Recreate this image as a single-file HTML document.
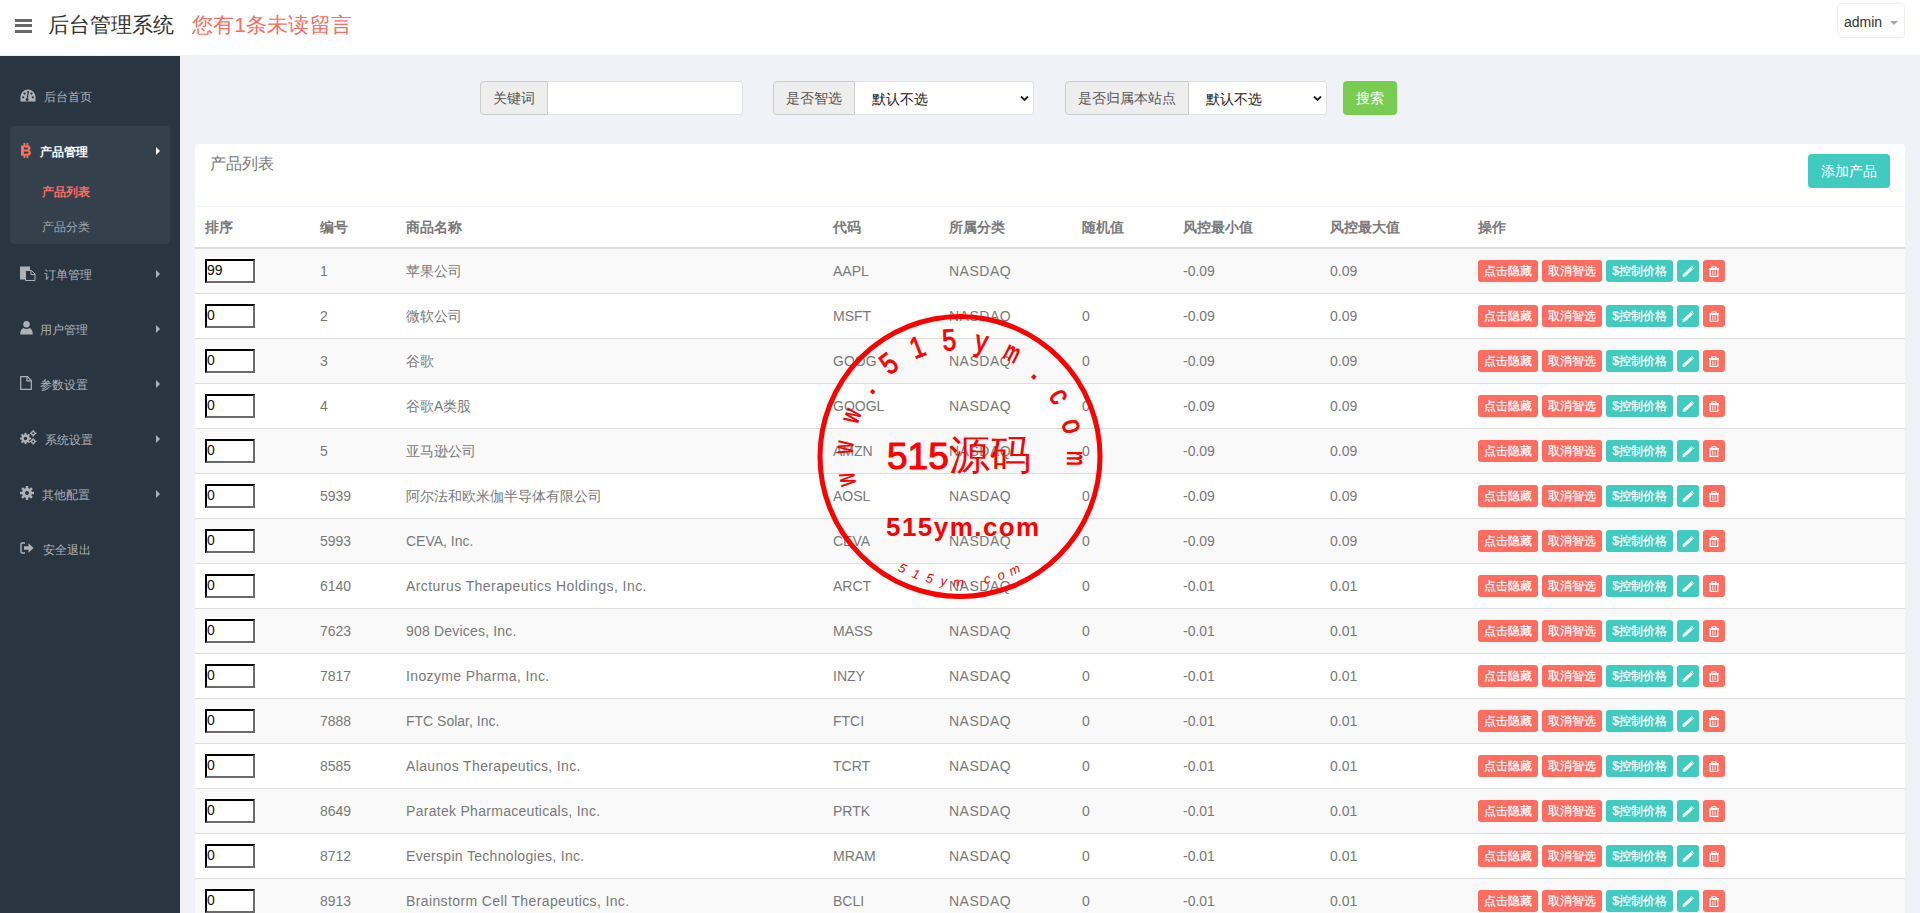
<!DOCTYPE html>
<html><head><meta charset="utf-8"><title>后台管理系统</title>
<style>
*{box-sizing:border-box;margin:0;padding:0}
html,body{width:1920px;height:913px;overflow:hidden}
body{background:#f1f2f7;font-family:"Liberation Sans",sans-serif;color:#797979;position:relative}
.abs{position:absolute;white-space:nowrap}
#hdr{position:absolute;left:0;top:0;width:1920px;height:56px;background:#fff;border-bottom:1px solid #eff0f5}
.bar{position:absolute;left:15px;width:17px;height:3px;background:#686868}
#title{position:absolute;left:48px;top:12px;font-size:21px;line-height:26px;color:#333}
#notice{position:absolute;left:192px;top:12px;letter-spacing:0.15px;font-size:21px;line-height:26px;color:#ff6c60}
#user{position:absolute;left:1837px;top:3px;width:68px;height:35px;border:1px solid #eceef4;border-radius:5px;background:#fff}
#user span{position:absolute;left:6px;top:11px;font-size:14px;line-height:14px;color:#333}
#user i{position:absolute;left:52px;top:17px;width:0;height:0;border-left:4px solid transparent;border-right:4px solid transparent;border-top:4px solid #a3a6b4}
#side{position:absolute;left:0;top:56px;width:180px;height:857px;background:#2a3542}
.mi{position:absolute;left:0;width:180px;height:20px;font-size:12px;line-height:20px;color:#aeb2b7}
.mi .t{position:absolute;top:1px}
.mi svg{position:absolute}
.arr{position:absolute;left:156px;top:6px;width:0;height:0;border-top:4px solid transparent;border-bottom:4px solid transparent;border-left:4px solid #aeb2b7}
#subbox{position:absolute;left:10px;top:70px;width:160px;height:118px;background:#35404d;border-radius:4px}
/* form */
.addon{position:absolute;top:81px;height:34px;background:#eee;border:1px solid #ccc;border-radius:4px 0 0 4px;font-size:14px;line-height:32px;color:#555;padding-left:12px}
.ctl{position:absolute;top:81px;height:34px;background:#fff;border:1px solid #e2e2e4;border-left:0;border-radius:0 4px 4px 0}
.ctl span{position:absolute;left:17px;top:8px;font-size:14px;line-height:18px;color:#222}
.chev{position:absolute;top:12px;width:9px;height:9px}
#sbtn{position:absolute;left:1343px;top:81px;width:54px;height:34px;background:#78cd51;border-radius:4px;color:#fff;font-size:14px;line-height:34px;text-align:center}
/* panel */
#panel{position:absolute;left:195px;top:144px;width:1710px;height:800px;background:#fff;border-radius:4px}
#ph{position:absolute;left:15px;top:10px;font-size:16px;line-height:20px;color:#797979}
#addbtn{position:absolute;left:1613px;top:10px;width:82px;height:34px;background:#41cac0;border-radius:4px;color:#fff;font-size:14px;line-height:34px;text-align:center}
#phline{position:absolute;left:0;top:62px;width:1710px;height:1px;background:#eff2f7}
.th{position:absolute;top:75px;font-size:14px;font-weight:bold;line-height:16px;color:#797979}
#thline{position:absolute;left:0;top:103px;width:1710px;height:2px;background:#ddd}
.row{position:absolute;left:0;width:1710px;height:45px;border-bottom:1px solid #ddd}
.row.odd{background:#f9f9f9}
.c{position:absolute;top:14px;font-size:14px;line-height:16px;color:#797979}
.inp{position:absolute;left:10px;top:10px;width:50px;height:24px;background:#fff;border:2px solid;border-color:#000 #6b6b6b #6b6b6b #000;font-size:14px;line-height:18px;color:#111;padding-left:0;box-shadow:0 0 0 1px #fff}
.btn{position:absolute;top:11px;height:22px;border-radius:3px;color:#fff;font-size:12px;line-height:23px;text-align:center;-webkit-text-stroke:0.2px #fff}
.r{background:#ff6c60}.g{background:#41cac0}
.btn svg{position:absolute}
</style></head>
<body>
<div id="hdr">
<div class="bar" style="top:19px"></div><div class="bar" style="top:24px"></div><div class="bar" style="top:30px"></div>
<div id="title">后台管理系统</div>
<div id="notice">您有1条未读留言</div>
<div id="user"><span>admin</span><i></i></div>
</div>
<div id="side">
<div id="subbox"></div>
<div class="mi" style="top:30px"><svg style="left:20px;top:3px" width="16" height="13" viewBox="0 0 16 13"><path d="M8 0.5A7.5 7.5 0 0 0 0.5 8v4.5h15V8A7.5 7.5 0 0 0 8 0.5z" fill="#aeb2b7"/><circle cx="3.2" cy="8.3" r="1.1" fill="#2a3542"/><circle cx="4.6" cy="4.6" r="1.1" fill="#2a3542"/><circle cx="8" cy="3.1" r="1.1" fill="#2a3542"/><circle cx="12.8" cy="8.3" r="1.1" fill="#2a3542"/><circle cx="11.4" cy="4.6" r="1.1" fill="#2a3542"/><path d="M8.2 4.2L7.2 9.6" stroke="#2a3542" stroke-width="1.2"/><circle cx="7.1" cy="10.4" r="1.5" fill="#2a3542"/></svg><span class="t" style="left:44px;">后台首页</span></div>
<div class="mi" style="top:85px"><svg style="left:20px;top:2px" width="12" height="15" viewBox="0 0 12 15"><path d="M1 2.5h6.2c2.2 0 3.3 1.1 3.3 2.6 0 1.1-.6 1.9-1.6 2.2 1.3.3 2.1 1.2 2.1 2.5 0 1.8-1.3 2.9-3.6 2.9H1z" fill="#ff6c60"/><path d="M4 4.6h2.7c.9 0 1.3.4 1.3 1s-.4 1-1.3 1H4zM4 8.5h3.1c1 0 1.5.4 1.5 1.1s-.5 1.1-1.5 1.1H4z" fill="#35404d"/><rect x="3.5" y="0" width="1.8" height="3" fill="#ff6c60"/><rect x="6.5" y="0" width="1.8" height="3" fill="#ff6c60"/><rect x="3.5" y="12" width="1.8" height="3" fill="#ff6c60"/><rect x="6.5" y="12" width="1.8" height="3" fill="#ff6c60"/></svg><span class="t" style="left:40px;color:#fff;font-weight:bold;">产品管理</span><i class="arr" style="border-left-color:#fff"></i></div>
<div class="mi" style="top:208px"><svg style="left:20px;top:2px" width="16" height="15" viewBox="0 0 16 15"><rect x="0" y="0.5" width="10" height="13" fill="#aeb2b7"/><path d="M5.5 4.5h6l3.5 3.5v6.5h-9.5z" fill="#2a3542" stroke="#aeb2b7" stroke-width="1"/><path d="M11 4.5v4h4" fill="none" stroke="#aeb2b7" stroke-width="1"/></svg><span class="t" style="left:44px;">订单管理</span><i class="arr"></i></div>
<div class="mi" style="top:263px"><svg style="left:20px;top:2px" width="13" height="14" viewBox="0 0 13 14"><circle cx="6.5" cy="3.3" r="3.2" fill="#aeb2b7"/><path d="M0.2 13.5c0-4 1.5-6.2 3.3-6.6 1.8 1.3 4.2 1.3 6 0 1.8.4 3.3 2.6 3.3 6.6z" fill="#aeb2b7"/></svg><span class="t" style="left:40px;">用户管理</span><i class="arr"></i></div>
<div class="mi" style="top:318px"><svg style="left:20px;top:2px" width="12" height="14" viewBox="0 0 12 14"><path d="M0.7 0.7h6.8l3.8 3.8v8.8H0.7z" fill="none" stroke="#aeb2b7" stroke-width="1.2"/><path d="M7 0.7v4.2h4.3" fill="none" stroke="#aeb2b7" stroke-width="1.2"/></svg><span class="t" style="left:40px;">参数设置</span><i class="arr"></i></div>
<div class="mi" style="top:373px"><svg style="left:20px;top:1px" width="17" height="15" viewBox="0 0 17 15"><g fill="#aeb2b7"><circle cx="5.5" cy="8.5" r="4.2"/><rect x="4.6" y="2.8" width="1.8" height="11.4"/><rect x="-0.2" y="7.6" width="11.4" height="1.8"/><rect x="4.6" y="2.8" width="1.8" height="11.4" transform="rotate(45 5.5 8.5)"/><rect x="4.6" y="2.8" width="1.8" height="11.4" transform="rotate(-45 5.5 8.5)"/><circle cx="13.2" cy="3.3" r="2.4"/><rect x="12.6" y="0" width="1.2" height="6.6"/><rect x="9.9" y="2.7" width="6.6" height="1.2"/><circle cx="13.2" cy="11.4" r="2.4"/><rect x="12.6" y="8.1" width="1.2" height="6.6"/><rect x="9.9" y="10.8" width="6.6" height="1.2"/></g><circle cx="5.5" cy="8.5" r="1.7" fill="#2a3542"/><circle cx="13.2" cy="3.3" r="1" fill="#2a3542"/><circle cx="13.2" cy="11.4" r="1" fill="#2a3542"/></svg><span class="t" style="left:45px;">系统设置</span><i class="arr"></i></div>
<div class="mi" style="top:428px"><svg style="left:20px;top:2px" width="14" height="14" viewBox="0 0 14 14"><g fill="#aeb2b7"><circle cx="7" cy="7" r="5"/><rect x="5.8" y="0" width="2.4" height="14"/><rect x="0" y="5.8" width="14" height="2.4"/><rect x="5.8" y="0" width="2.4" height="14" transform="rotate(45 7 7)"/><rect x="5.8" y="0" width="2.4" height="14" transform="rotate(-45 7 7)"/></g><circle cx="7" cy="7" r="2" fill="#2a3542"/></svg><span class="t" style="left:42px;">其他配置</span><i class="arr"></i></div>
<div class="mi" style="top:483px"><svg style="left:20px;top:3px" width="14" height="12" viewBox="0 0 14 12"><path d="M5 1H2.2C1.5 1 1 1.5 1 2.2v7.6C1 10.5 1.5 11 2.2 11H5" fill="none" stroke="#aeb2b7" stroke-width="1.4"/><path d="M4 4.2h4.5V1.2L13.6 6l-5.1 4.8V7.8H4z" fill="#aeb2b7"/></svg><span class="t" style="left:43px;">安全退出</span></div>
<div class="mi" style="top:125px"><span class="t" style="left:42px;color:#ff6c60;font-weight:bold">产品列表</span></div>
<div class="mi" style="top:160px"><span class="t" style="left:42px;color:#a3a8af">产品分类</span></div>
</div>
<div class="addon" style="left:480px;width:68px">关键词</div>
<div class="ctl" style="left:548px;width:195px"></div>
<div class="addon" style="left:773px;width:82px">是否智选</div>
<div class="ctl" style="left:855px;width:179px"><span>默认不选</span><svg class="chev" style="left:165px" viewBox="0 0 9 9"><path d="M1 2.5L4.5 6 8 2.5" fill="none" stroke="#222" stroke-width="1.8"/></svg></div>
<div class="addon" style="left:1065px;width:124px">是否归属本站点</div>
<div class="ctl" style="left:1189px;width:138px"><span>默认不选</span><svg class="chev" style="left:124px" viewBox="0 0 9 9"><path d="M1 2.5L4.5 6 8 2.5" fill="none" stroke="#222" stroke-width="1.8"/></svg></div>
<div id="sbtn">搜索</div>
<div id="panel">
<div id="ph">产品列表</div>
<div id="addbtn">添加产品</div>
<div id="phline"></div>
<div class="th" style="left:10px">排序</div>
<div class="th" style="left:125px">编号</div>
<div class="th" style="left:211px">商品名称</div>
<div class="th" style="left:638px">代码</div>
<div class="th" style="left:754px">所属分类</div>
<div class="th" style="left:887px">随机值</div>
<div class="th" style="left:988px">风控最小值</div>
<div class="th" style="left:1135px">风控最大值</div>
<div class="th" style="left:1283px">操作</div>
<div id="thline"></div>
<div class="row odd" style="top:105px"><div class="inp">99</div><div class="c" style="left:125px;">1</div><div class="c" style="left:211px;">苹果公司</div><div class="c" style="left:638px;">AAPL</div><div class="c" style="left:754px;letter-spacing:0.5px;">NASDAQ</div><div class="c" style="left:988px;">-0.09</div><div class="c" style="left:1135px;">0.09</div><div class="btn r" style="left:1283px;width:60px">点击隐藏</div><div class="btn r" style="left:1347px;width:60px">取消智选</div><div class="btn g" style="left:1411px;width:67px">$控制价格</div><div class="btn g" style="left:1482px;width:22px"><svg style="left:0;top:0" width="22" height="22" viewBox="0 0 22 22"><path d="M5.5 17L6 14.2 14.9 5.9 17 8.2 8.3 16.6z" fill="#fff"/><path d="M13.9 6.8L16.1 9.1" stroke="#41cac0" stroke-width="0.7"/><path d="M7.2 14.6L8.1 15.5" stroke="#41cac0" stroke-width="0.6"/></svg></div><div class="btn r" style="left:1508px;width:22px"><svg style="left:0;top:0" width="22" height="22" viewBox="0 0 22 22"><path d="M8.8 8.4V7.6C8.8 7 9.2 6.8 9.8 6.8h2.4c.6 0 1 .2 1 .8v.8" fill="none" stroke="#fff" stroke-width="1.1"/><rect x="6" y="8" width="10" height="1.5" fill="#fff"/><path d="M7.2 9.3h7.6v7.1H7.2z" fill="none" stroke="#fff" stroke-width="1.3"/><path d="M9.5 10.5v4.6M11 10.5v4.6M12.5 10.5v4.6" stroke="#fff" stroke-width="0.8" opacity="0.75"/></svg></div></div>
<div class="row" style="top:150px"><div class="inp">0</div><div class="c" style="left:125px;">2</div><div class="c" style="left:211px;">微软公司</div><div class="c" style="left:638px;">MSFT</div><div class="c" style="left:754px;letter-spacing:0.5px;">NASDAQ</div><div class="c" style="left:887px;">0</div><div class="c" style="left:988px;">-0.09</div><div class="c" style="left:1135px;">0.09</div><div class="btn r" style="left:1283px;width:60px">点击隐藏</div><div class="btn r" style="left:1347px;width:60px">取消智选</div><div class="btn g" style="left:1411px;width:67px">$控制价格</div><div class="btn g" style="left:1482px;width:22px"><svg style="left:0;top:0" width="22" height="22" viewBox="0 0 22 22"><path d="M5.5 17L6 14.2 14.9 5.9 17 8.2 8.3 16.6z" fill="#fff"/><path d="M13.9 6.8L16.1 9.1" stroke="#41cac0" stroke-width="0.7"/><path d="M7.2 14.6L8.1 15.5" stroke="#41cac0" stroke-width="0.6"/></svg></div><div class="btn r" style="left:1508px;width:22px"><svg style="left:0;top:0" width="22" height="22" viewBox="0 0 22 22"><path d="M8.8 8.4V7.6C8.8 7 9.2 6.8 9.8 6.8h2.4c.6 0 1 .2 1 .8v.8" fill="none" stroke="#fff" stroke-width="1.1"/><rect x="6" y="8" width="10" height="1.5" fill="#fff"/><path d="M7.2 9.3h7.6v7.1H7.2z" fill="none" stroke="#fff" stroke-width="1.3"/><path d="M9.5 10.5v4.6M11 10.5v4.6M12.5 10.5v4.6" stroke="#fff" stroke-width="0.8" opacity="0.75"/></svg></div></div>
<div class="row odd" style="top:195px"><div class="inp">0</div><div class="c" style="left:125px;">3</div><div class="c" style="left:211px;">谷歌</div><div class="c" style="left:638px;">GOOG</div><div class="c" style="left:754px;letter-spacing:0.5px;">NASDAQ</div><div class="c" style="left:887px;">0</div><div class="c" style="left:988px;">-0.09</div><div class="c" style="left:1135px;">0.09</div><div class="btn r" style="left:1283px;width:60px">点击隐藏</div><div class="btn r" style="left:1347px;width:60px">取消智选</div><div class="btn g" style="left:1411px;width:67px">$控制价格</div><div class="btn g" style="left:1482px;width:22px"><svg style="left:0;top:0" width="22" height="22" viewBox="0 0 22 22"><path d="M5.5 17L6 14.2 14.9 5.9 17 8.2 8.3 16.6z" fill="#fff"/><path d="M13.9 6.8L16.1 9.1" stroke="#41cac0" stroke-width="0.7"/><path d="M7.2 14.6L8.1 15.5" stroke="#41cac0" stroke-width="0.6"/></svg></div><div class="btn r" style="left:1508px;width:22px"><svg style="left:0;top:0" width="22" height="22" viewBox="0 0 22 22"><path d="M8.8 8.4V7.6C8.8 7 9.2 6.8 9.8 6.8h2.4c.6 0 1 .2 1 .8v.8" fill="none" stroke="#fff" stroke-width="1.1"/><rect x="6" y="8" width="10" height="1.5" fill="#fff"/><path d="M7.2 9.3h7.6v7.1H7.2z" fill="none" stroke="#fff" stroke-width="1.3"/><path d="M9.5 10.5v4.6M11 10.5v4.6M12.5 10.5v4.6" stroke="#fff" stroke-width="0.8" opacity="0.75"/></svg></div></div>
<div class="row" style="top:240px"><div class="inp">0</div><div class="c" style="left:125px;">4</div><div class="c" style="left:211px;">谷歌A类股</div><div class="c" style="left:638px;">GOOGL</div><div class="c" style="left:754px;letter-spacing:0.5px;">NASDAQ</div><div class="c" style="left:887px;">0</div><div class="c" style="left:988px;">-0.09</div><div class="c" style="left:1135px;">0.09</div><div class="btn r" style="left:1283px;width:60px">点击隐藏</div><div class="btn r" style="left:1347px;width:60px">取消智选</div><div class="btn g" style="left:1411px;width:67px">$控制价格</div><div class="btn g" style="left:1482px;width:22px"><svg style="left:0;top:0" width="22" height="22" viewBox="0 0 22 22"><path d="M5.5 17L6 14.2 14.9 5.9 17 8.2 8.3 16.6z" fill="#fff"/><path d="M13.9 6.8L16.1 9.1" stroke="#41cac0" stroke-width="0.7"/><path d="M7.2 14.6L8.1 15.5" stroke="#41cac0" stroke-width="0.6"/></svg></div><div class="btn r" style="left:1508px;width:22px"><svg style="left:0;top:0" width="22" height="22" viewBox="0 0 22 22"><path d="M8.8 8.4V7.6C8.8 7 9.2 6.8 9.8 6.8h2.4c.6 0 1 .2 1 .8v.8" fill="none" stroke="#fff" stroke-width="1.1"/><rect x="6" y="8" width="10" height="1.5" fill="#fff"/><path d="M7.2 9.3h7.6v7.1H7.2z" fill="none" stroke="#fff" stroke-width="1.3"/><path d="M9.5 10.5v4.6M11 10.5v4.6M12.5 10.5v4.6" stroke="#fff" stroke-width="0.8" opacity="0.75"/></svg></div></div>
<div class="row odd" style="top:285px"><div class="inp">0</div><div class="c" style="left:125px;">5</div><div class="c" style="left:211px;">亚马逊公司</div><div class="c" style="left:638px;">AMZN</div><div class="c" style="left:754px;letter-spacing:0.5px;">NASDAQ</div><div class="c" style="left:887px;">0</div><div class="c" style="left:988px;">-0.09</div><div class="c" style="left:1135px;">0.09</div><div class="btn r" style="left:1283px;width:60px">点击隐藏</div><div class="btn r" style="left:1347px;width:60px">取消智选</div><div class="btn g" style="left:1411px;width:67px">$控制价格</div><div class="btn g" style="left:1482px;width:22px"><svg style="left:0;top:0" width="22" height="22" viewBox="0 0 22 22"><path d="M5.5 17L6 14.2 14.9 5.9 17 8.2 8.3 16.6z" fill="#fff"/><path d="M13.9 6.8L16.1 9.1" stroke="#41cac0" stroke-width="0.7"/><path d="M7.2 14.6L8.1 15.5" stroke="#41cac0" stroke-width="0.6"/></svg></div><div class="btn r" style="left:1508px;width:22px"><svg style="left:0;top:0" width="22" height="22" viewBox="0 0 22 22"><path d="M8.8 8.4V7.6C8.8 7 9.2 6.8 9.8 6.8h2.4c.6 0 1 .2 1 .8v.8" fill="none" stroke="#fff" stroke-width="1.1"/><rect x="6" y="8" width="10" height="1.5" fill="#fff"/><path d="M7.2 9.3h7.6v7.1H7.2z" fill="none" stroke="#fff" stroke-width="1.3"/><path d="M9.5 10.5v4.6M11 10.5v4.6M12.5 10.5v4.6" stroke="#fff" stroke-width="0.8" opacity="0.75"/></svg></div></div>
<div class="row" style="top:330px"><div class="inp">0</div><div class="c" style="left:125px;">5939</div><div class="c" style="left:211px;">阿尔法和欧米伽半导体有限公司</div><div class="c" style="left:638px;">AOSL</div><div class="c" style="left:754px;letter-spacing:0.5px;">NASDAQ</div><div class="c" style="left:887px;">0</div><div class="c" style="left:988px;">-0.09</div><div class="c" style="left:1135px;">0.09</div><div class="btn r" style="left:1283px;width:60px">点击隐藏</div><div class="btn r" style="left:1347px;width:60px">取消智选</div><div class="btn g" style="left:1411px;width:67px">$控制价格</div><div class="btn g" style="left:1482px;width:22px"><svg style="left:0;top:0" width="22" height="22" viewBox="0 0 22 22"><path d="M5.5 17L6 14.2 14.9 5.9 17 8.2 8.3 16.6z" fill="#fff"/><path d="M13.9 6.8L16.1 9.1" stroke="#41cac0" stroke-width="0.7"/><path d="M7.2 14.6L8.1 15.5" stroke="#41cac0" stroke-width="0.6"/></svg></div><div class="btn r" style="left:1508px;width:22px"><svg style="left:0;top:0" width="22" height="22" viewBox="0 0 22 22"><path d="M8.8 8.4V7.6C8.8 7 9.2 6.8 9.8 6.8h2.4c.6 0 1 .2 1 .8v.8" fill="none" stroke="#fff" stroke-width="1.1"/><rect x="6" y="8" width="10" height="1.5" fill="#fff"/><path d="M7.2 9.3h7.6v7.1H7.2z" fill="none" stroke="#fff" stroke-width="1.3"/><path d="M9.5 10.5v4.6M11 10.5v4.6M12.5 10.5v4.6" stroke="#fff" stroke-width="0.8" opacity="0.75"/></svg></div></div>
<div class="row odd" style="top:375px"><div class="inp">0</div><div class="c" style="left:125px;">5993</div><div class="c" style="left:211px;">CEVA, Inc.</div><div class="c" style="left:638px;">CEVA</div><div class="c" style="left:754px;letter-spacing:0.5px;">NASDAQ</div><div class="c" style="left:887px;">0</div><div class="c" style="left:988px;">-0.09</div><div class="c" style="left:1135px;">0.09</div><div class="btn r" style="left:1283px;width:60px">点击隐藏</div><div class="btn r" style="left:1347px;width:60px">取消智选</div><div class="btn g" style="left:1411px;width:67px">$控制价格</div><div class="btn g" style="left:1482px;width:22px"><svg style="left:0;top:0" width="22" height="22" viewBox="0 0 22 22"><path d="M5.5 17L6 14.2 14.9 5.9 17 8.2 8.3 16.6z" fill="#fff"/><path d="M13.9 6.8L16.1 9.1" stroke="#41cac0" stroke-width="0.7"/><path d="M7.2 14.6L8.1 15.5" stroke="#41cac0" stroke-width="0.6"/></svg></div><div class="btn r" style="left:1508px;width:22px"><svg style="left:0;top:0" width="22" height="22" viewBox="0 0 22 22"><path d="M8.8 8.4V7.6C8.8 7 9.2 6.8 9.8 6.8h2.4c.6 0 1 .2 1 .8v.8" fill="none" stroke="#fff" stroke-width="1.1"/><rect x="6" y="8" width="10" height="1.5" fill="#fff"/><path d="M7.2 9.3h7.6v7.1H7.2z" fill="none" stroke="#fff" stroke-width="1.3"/><path d="M9.5 10.5v4.6M11 10.5v4.6M12.5 10.5v4.6" stroke="#fff" stroke-width="0.8" opacity="0.75"/></svg></div></div>
<div class="row" style="top:420px"><div class="inp">0</div><div class="c" style="left:125px;">6140</div><div class="c" style="left:211px;letter-spacing:0.43px;">Arcturus Therapeutics Holdings, Inc.</div><div class="c" style="left:638px;">ARCT</div><div class="c" style="left:754px;letter-spacing:0.5px;">NASDAQ</div><div class="c" style="left:887px;">0</div><div class="c" style="left:988px;">-0.01</div><div class="c" style="left:1135px;">0.01</div><div class="btn r" style="left:1283px;width:60px">点击隐藏</div><div class="btn r" style="left:1347px;width:60px">取消智选</div><div class="btn g" style="left:1411px;width:67px">$控制价格</div><div class="btn g" style="left:1482px;width:22px"><svg style="left:0;top:0" width="22" height="22" viewBox="0 0 22 22"><path d="M5.5 17L6 14.2 14.9 5.9 17 8.2 8.3 16.6z" fill="#fff"/><path d="M13.9 6.8L16.1 9.1" stroke="#41cac0" stroke-width="0.7"/><path d="M7.2 14.6L8.1 15.5" stroke="#41cac0" stroke-width="0.6"/></svg></div><div class="btn r" style="left:1508px;width:22px"><svg style="left:0;top:0" width="22" height="22" viewBox="0 0 22 22"><path d="M8.8 8.4V7.6C8.8 7 9.2 6.8 9.8 6.8h2.4c.6 0 1 .2 1 .8v.8" fill="none" stroke="#fff" stroke-width="1.1"/><rect x="6" y="8" width="10" height="1.5" fill="#fff"/><path d="M7.2 9.3h7.6v7.1H7.2z" fill="none" stroke="#fff" stroke-width="1.3"/><path d="M9.5 10.5v4.6M11 10.5v4.6M12.5 10.5v4.6" stroke="#fff" stroke-width="0.8" opacity="0.75"/></svg></div></div>
<div class="row odd" style="top:465px"><div class="inp">0</div><div class="c" style="left:125px;">7623</div><div class="c" style="left:211px;letter-spacing:0.19px;">908 Devices, Inc.</div><div class="c" style="left:638px;">MASS</div><div class="c" style="left:754px;letter-spacing:0.5px;">NASDAQ</div><div class="c" style="left:887px;">0</div><div class="c" style="left:988px;">-0.01</div><div class="c" style="left:1135px;">0.01</div><div class="btn r" style="left:1283px;width:60px">点击隐藏</div><div class="btn r" style="left:1347px;width:60px">取消智选</div><div class="btn g" style="left:1411px;width:67px">$控制价格</div><div class="btn g" style="left:1482px;width:22px"><svg style="left:0;top:0" width="22" height="22" viewBox="0 0 22 22"><path d="M5.5 17L6 14.2 14.9 5.9 17 8.2 8.3 16.6z" fill="#fff"/><path d="M13.9 6.8L16.1 9.1" stroke="#41cac0" stroke-width="0.7"/><path d="M7.2 14.6L8.1 15.5" stroke="#41cac0" stroke-width="0.6"/></svg></div><div class="btn r" style="left:1508px;width:22px"><svg style="left:0;top:0" width="22" height="22" viewBox="0 0 22 22"><path d="M8.8 8.4V7.6C8.8 7 9.2 6.8 9.8 6.8h2.4c.6 0 1 .2 1 .8v.8" fill="none" stroke="#fff" stroke-width="1.1"/><rect x="6" y="8" width="10" height="1.5" fill="#fff"/><path d="M7.2 9.3h7.6v7.1H7.2z" fill="none" stroke="#fff" stroke-width="1.3"/><path d="M9.5 10.5v4.6M11 10.5v4.6M12.5 10.5v4.6" stroke="#fff" stroke-width="0.8" opacity="0.75"/></svg></div></div>
<div class="row" style="top:510px"><div class="inp">0</div><div class="c" style="left:125px;">7817</div><div class="c" style="left:211px;letter-spacing:0.37px;">Inozyme Pharma, Inc.</div><div class="c" style="left:638px;">INZY</div><div class="c" style="left:754px;letter-spacing:0.5px;">NASDAQ</div><div class="c" style="left:887px;">0</div><div class="c" style="left:988px;">-0.01</div><div class="c" style="left:1135px;">0.01</div><div class="btn r" style="left:1283px;width:60px">点击隐藏</div><div class="btn r" style="left:1347px;width:60px">取消智选</div><div class="btn g" style="left:1411px;width:67px">$控制价格</div><div class="btn g" style="left:1482px;width:22px"><svg style="left:0;top:0" width="22" height="22" viewBox="0 0 22 22"><path d="M5.5 17L6 14.2 14.9 5.9 17 8.2 8.3 16.6z" fill="#fff"/><path d="M13.9 6.8L16.1 9.1" stroke="#41cac0" stroke-width="0.7"/><path d="M7.2 14.6L8.1 15.5" stroke="#41cac0" stroke-width="0.6"/></svg></div><div class="btn r" style="left:1508px;width:22px"><svg style="left:0;top:0" width="22" height="22" viewBox="0 0 22 22"><path d="M8.8 8.4V7.6C8.8 7 9.2 6.8 9.8 6.8h2.4c.6 0 1 .2 1 .8v.8" fill="none" stroke="#fff" stroke-width="1.1"/><rect x="6" y="8" width="10" height="1.5" fill="#fff"/><path d="M7.2 9.3h7.6v7.1H7.2z" fill="none" stroke="#fff" stroke-width="1.3"/><path d="M9.5 10.5v4.6M11 10.5v4.6M12.5 10.5v4.6" stroke="#fff" stroke-width="0.8" opacity="0.75"/></svg></div></div>
<div class="row odd" style="top:555px"><div class="inp">0</div><div class="c" style="left:125px;">7888</div><div class="c" style="left:211px;">FTC Solar, Inc.</div><div class="c" style="left:638px;">FTCI</div><div class="c" style="left:754px;letter-spacing:0.5px;">NASDAQ</div><div class="c" style="left:887px;">0</div><div class="c" style="left:988px;">-0.01</div><div class="c" style="left:1135px;">0.01</div><div class="btn r" style="left:1283px;width:60px">点击隐藏</div><div class="btn r" style="left:1347px;width:60px">取消智选</div><div class="btn g" style="left:1411px;width:67px">$控制价格</div><div class="btn g" style="left:1482px;width:22px"><svg style="left:0;top:0" width="22" height="22" viewBox="0 0 22 22"><path d="M5.5 17L6 14.2 14.9 5.9 17 8.2 8.3 16.6z" fill="#fff"/><path d="M13.9 6.8L16.1 9.1" stroke="#41cac0" stroke-width="0.7"/><path d="M7.2 14.6L8.1 15.5" stroke="#41cac0" stroke-width="0.6"/></svg></div><div class="btn r" style="left:1508px;width:22px"><svg style="left:0;top:0" width="22" height="22" viewBox="0 0 22 22"><path d="M8.8 8.4V7.6C8.8 7 9.2 6.8 9.8 6.8h2.4c.6 0 1 .2 1 .8v.8" fill="none" stroke="#fff" stroke-width="1.1"/><rect x="6" y="8" width="10" height="1.5" fill="#fff"/><path d="M7.2 9.3h7.6v7.1H7.2z" fill="none" stroke="#fff" stroke-width="1.3"/><path d="M9.5 10.5v4.6M11 10.5v4.6M12.5 10.5v4.6" stroke="#fff" stroke-width="0.8" opacity="0.75"/></svg></div></div>
<div class="row" style="top:600px"><div class="inp">0</div><div class="c" style="left:125px;">8585</div><div class="c" style="left:211px;letter-spacing:0.36px;">Alaunos Therapeutics, Inc.</div><div class="c" style="left:638px;">TCRT</div><div class="c" style="left:754px;letter-spacing:0.5px;">NASDAQ</div><div class="c" style="left:887px;">0</div><div class="c" style="left:988px;">-0.01</div><div class="c" style="left:1135px;">0.01</div><div class="btn r" style="left:1283px;width:60px">点击隐藏</div><div class="btn r" style="left:1347px;width:60px">取消智选</div><div class="btn g" style="left:1411px;width:67px">$控制价格</div><div class="btn g" style="left:1482px;width:22px"><svg style="left:0;top:0" width="22" height="22" viewBox="0 0 22 22"><path d="M5.5 17L6 14.2 14.9 5.9 17 8.2 8.3 16.6z" fill="#fff"/><path d="M13.9 6.8L16.1 9.1" stroke="#41cac0" stroke-width="0.7"/><path d="M7.2 14.6L8.1 15.5" stroke="#41cac0" stroke-width="0.6"/></svg></div><div class="btn r" style="left:1508px;width:22px"><svg style="left:0;top:0" width="22" height="22" viewBox="0 0 22 22"><path d="M8.8 8.4V7.6C8.8 7 9.2 6.8 9.8 6.8h2.4c.6 0 1 .2 1 .8v.8" fill="none" stroke="#fff" stroke-width="1.1"/><rect x="6" y="8" width="10" height="1.5" fill="#fff"/><path d="M7.2 9.3h7.6v7.1H7.2z" fill="none" stroke="#fff" stroke-width="1.3"/><path d="M9.5 10.5v4.6M11 10.5v4.6M12.5 10.5v4.6" stroke="#fff" stroke-width="0.8" opacity="0.75"/></svg></div></div>
<div class="row odd" style="top:645px"><div class="inp">0</div><div class="c" style="left:125px;">8649</div><div class="c" style="left:211px;letter-spacing:0.29px;">Paratek Pharmaceuticals, Inc.</div><div class="c" style="left:638px;">PRTK</div><div class="c" style="left:754px;letter-spacing:0.5px;">NASDAQ</div><div class="c" style="left:887px;">0</div><div class="c" style="left:988px;">-0.01</div><div class="c" style="left:1135px;">0.01</div><div class="btn r" style="left:1283px;width:60px">点击隐藏</div><div class="btn r" style="left:1347px;width:60px">取消智选</div><div class="btn g" style="left:1411px;width:67px">$控制价格</div><div class="btn g" style="left:1482px;width:22px"><svg style="left:0;top:0" width="22" height="22" viewBox="0 0 22 22"><path d="M5.5 17L6 14.2 14.9 5.9 17 8.2 8.3 16.6z" fill="#fff"/><path d="M13.9 6.8L16.1 9.1" stroke="#41cac0" stroke-width="0.7"/><path d="M7.2 14.6L8.1 15.5" stroke="#41cac0" stroke-width="0.6"/></svg></div><div class="btn r" style="left:1508px;width:22px"><svg style="left:0;top:0" width="22" height="22" viewBox="0 0 22 22"><path d="M8.8 8.4V7.6C8.8 7 9.2 6.8 9.8 6.8h2.4c.6 0 1 .2 1 .8v.8" fill="none" stroke="#fff" stroke-width="1.1"/><rect x="6" y="8" width="10" height="1.5" fill="#fff"/><path d="M7.2 9.3h7.6v7.1H7.2z" fill="none" stroke="#fff" stroke-width="1.3"/><path d="M9.5 10.5v4.6M11 10.5v4.6M12.5 10.5v4.6" stroke="#fff" stroke-width="0.8" opacity="0.75"/></svg></div></div>
<div class="row" style="top:690px"><div class="inp">0</div><div class="c" style="left:125px;">8712</div><div class="c" style="left:211px;letter-spacing:0.31px;">Everspin Technologies, Inc.</div><div class="c" style="left:638px;">MRAM</div><div class="c" style="left:754px;letter-spacing:0.5px;">NASDAQ</div><div class="c" style="left:887px;">0</div><div class="c" style="left:988px;">-0.01</div><div class="c" style="left:1135px;">0.01</div><div class="btn r" style="left:1283px;width:60px">点击隐藏</div><div class="btn r" style="left:1347px;width:60px">取消智选</div><div class="btn g" style="left:1411px;width:67px">$控制价格</div><div class="btn g" style="left:1482px;width:22px"><svg style="left:0;top:0" width="22" height="22" viewBox="0 0 22 22"><path d="M5.5 17L6 14.2 14.9 5.9 17 8.2 8.3 16.6z" fill="#fff"/><path d="M13.9 6.8L16.1 9.1" stroke="#41cac0" stroke-width="0.7"/><path d="M7.2 14.6L8.1 15.5" stroke="#41cac0" stroke-width="0.6"/></svg></div><div class="btn r" style="left:1508px;width:22px"><svg style="left:0;top:0" width="22" height="22" viewBox="0 0 22 22"><path d="M8.8 8.4V7.6C8.8 7 9.2 6.8 9.8 6.8h2.4c.6 0 1 .2 1 .8v.8" fill="none" stroke="#fff" stroke-width="1.1"/><rect x="6" y="8" width="10" height="1.5" fill="#fff"/><path d="M7.2 9.3h7.6v7.1H7.2z" fill="none" stroke="#fff" stroke-width="1.3"/><path d="M9.5 10.5v4.6M11 10.5v4.6M12.5 10.5v4.6" stroke="#fff" stroke-width="0.8" opacity="0.75"/></svg></div></div>
<div class="row odd" style="top:735px"><div class="inp">0</div><div class="c" style="left:125px;">8913</div><div class="c" style="left:211px;letter-spacing:0.38px;">Brainstorm Cell Therapeutics, Inc.</div><div class="c" style="left:638px;">BCLI</div><div class="c" style="left:754px;letter-spacing:0.5px;">NASDAQ</div><div class="c" style="left:887px;">0</div><div class="c" style="left:988px;">-0.01</div><div class="c" style="left:1135px;">0.01</div><div class="btn r" style="left:1283px;width:60px">点击隐藏</div><div class="btn r" style="left:1347px;width:60px">取消智选</div><div class="btn g" style="left:1411px;width:67px">$控制价格</div><div class="btn g" style="left:1482px;width:22px"><svg style="left:0;top:0" width="22" height="22" viewBox="0 0 22 22"><path d="M5.5 17L6 14.2 14.9 5.9 17 8.2 8.3 16.6z" fill="#fff"/><path d="M13.9 6.8L16.1 9.1" stroke="#41cac0" stroke-width="0.7"/><path d="M7.2 14.6L8.1 15.5" stroke="#41cac0" stroke-width="0.6"/></svg></div><div class="btn r" style="left:1508px;width:22px"><svg style="left:0;top:0" width="22" height="22" viewBox="0 0 22 22"><path d="M8.8 8.4V7.6C8.8 7 9.2 6.8 9.8 6.8h2.4c.6 0 1 .2 1 .8v.8" fill="none" stroke="#fff" stroke-width="1.1"/><rect x="6" y="8" width="10" height="1.5" fill="#fff"/><path d="M7.2 9.3h7.6v7.1H7.2z" fill="none" stroke="#fff" stroke-width="1.3"/><path d="M9.5 10.5v4.6M11 10.5v4.6M12.5 10.5v4.6" stroke="#fff" stroke-width="0.8" opacity="0.75"/></svg></div></div>
</div>
<svg style="position:absolute;left:0;top:0" width="1920" height="913" viewBox="0 0 1920 913">
<circle cx="960" cy="456.5" r="140" fill="none" stroke="#ff0000" stroke-width="5"/>
<text x="0" y="0" transform="translate(855.1 477.8) rotate(-101.5) scale(0.58 1)" font-family="Liberation Sans" font-weight="bold" font-size="29" fill="#ff0000" text-anchor="middle">w</text>
<text x="0" y="0" transform="translate(853.3 448.0) rotate(-85.5) scale(0.58 1)" font-family="Liberation Sans" font-weight="bold" font-size="29" fill="#ff0000" text-anchor="middle">w</text>
<text x="0" y="0" transform="translate(859.8 418.9) rotate(-69.4) scale(0.58 1)" font-family="Liberation Sans" font-weight="bold" font-size="29" fill="#ff0000" text-anchor="middle">w</text>
<text x="0" y="0" transform="translate(874.1 392.7) rotate(-53.4) scale(1.0 1)" font-family="Liberation Sans" font-size="30" fill="#ff0000" stroke="#ff0000" stroke-width="0.9" text-anchor="middle">.</text>
<text x="0" y="0" transform="translate(895.0 371.5) rotate(-37.4) scale(0.82 1)" font-family="Liberation Sans" font-size="30" fill="#ff0000" stroke="#ff0000" stroke-width="0.9" text-anchor="middle">5</text>
<text x="0" y="0" transform="translate(921.0 356.8) rotate(-21.3) scale(0.82 1)" font-family="Liberation Sans" font-size="30" fill="#ff0000" stroke="#ff0000" stroke-width="0.9" text-anchor="middle">1</text>
<text x="0" y="0" transform="translate(950.1 350.0) rotate(-5.3) scale(0.82 1)" font-family="Liberation Sans" font-size="30" fill="#ff0000" stroke="#ff0000" stroke-width="0.9" text-anchor="middle">5</text>
<text x="0" y="0" transform="translate(979.9 351.4) rotate(10.7) scale(0.82 1)" font-family="Liberation Sans" font-size="30" fill="#ff0000" stroke="#ff0000" stroke-width="0.9" text-anchor="middle">y</text>
<text x="0" y="0" transform="translate(1008.1 360.9) rotate(26.7) scale(0.58 1)" font-family="Liberation Sans" font-weight="bold" font-size="29" fill="#ff0000" text-anchor="middle">m</text>
<text x="0" y="0" transform="translate(1032.7 378.0) rotate(42.8) scale(1.0 1)" font-family="Liberation Sans" font-size="30" fill="#ff0000" stroke="#ff0000" stroke-width="0.9" text-anchor="middle">.</text>
<text x="0" y="0" transform="translate(1051.5 401.1) rotate(58.8) scale(0.82 1)" font-family="Liberation Sans" font-size="30" fill="#ff0000" stroke="#ff0000" stroke-width="0.9" text-anchor="middle">c</text>
<text x="0" y="0" transform="translate(1063.3 428.5) rotate(74.8) scale(0.82 1)" font-family="Liberation Sans" font-size="30" fill="#ff0000" stroke="#ff0000" stroke-width="0.9" text-anchor="middle">o</text>
<text x="0" y="0" transform="translate(1067.0 458.1) rotate(90.9) scale(0.58 1)" font-family="Liberation Sans" font-weight="bold" font-size="29" fill="#ff0000" text-anchor="middle">m</text>
<text x="887" y="469" font-family="Liberation Sans" font-size="37" fill="#ff0000" stroke="#ff0000" stroke-width="1.1">515<tspan stroke-width="0" font-size="41">源码</tspan></text>
<text x="886" y="536" font-family="Liberation Sans" font-weight="bold" font-size="26" letter-spacing="1.45" fill="#ff0000">515ym.com</text>
<text x="900.6" y="572.1" transform="rotate(27.2 900.6 572.1)" font-family="Liberation Sans" font-style="italic" font-size="13" fill="#ff0000" text-anchor="middle">5</text>
<text x="914.3" y="578.2" transform="rotate(20.6 914.3 578.2)" font-family="Liberation Sans" font-style="italic" font-size="13" fill="#ff0000" text-anchor="middle">1</text>
<text x="928.6" y="582.6" transform="rotate(14.0 928.6 582.6)" font-family="Liberation Sans" font-style="italic" font-size="13" fill="#ff0000" text-anchor="middle">5</text>
<text x="943.3" y="585.4" transform="rotate(7.4 943.3 585.4)" font-family="Liberation Sans" font-style="italic" font-size="13" fill="#ff0000" text-anchor="middle">y</text>
<text x="958.3" y="586.5" transform="rotate(0.8 958.3 586.5)" font-family="Liberation Sans" font-style="italic" font-size="13" fill="#ff0000" text-anchor="middle">m</text>
<text x="973.3" y="585.8" transform="rotate(-5.9 973.3 585.8)" font-family="Liberation Sans" font-style="italic" font-size="13" fill="#ff0000" text-anchor="middle">.</text>
<text x="988.0" y="583.4" transform="rotate(-12.5 988.0 583.4)" font-family="Liberation Sans" font-style="italic" font-size="13" fill="#ff0000" text-anchor="middle">c</text>
<text x="1002.5" y="579.4" transform="rotate(-19.1 1002.5 579.4)" font-family="Liberation Sans" font-style="italic" font-size="13" fill="#ff0000" text-anchor="middle">o</text>
<text x="1016.3" y="573.7" transform="rotate(-25.7 1016.3 573.7)" font-family="Liberation Sans" font-style="italic" font-size="13" fill="#ff0000" text-anchor="middle">m</text>
</svg>
</body></html>
